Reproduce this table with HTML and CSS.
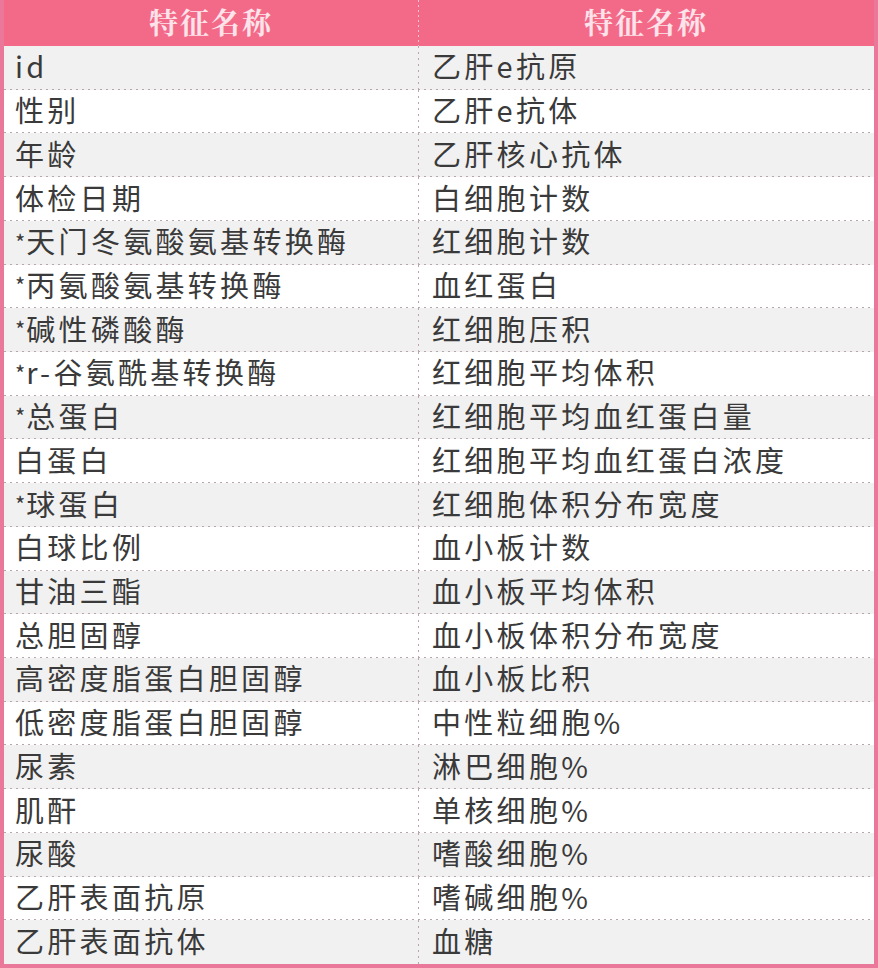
FILE: index.html
```html
<!DOCTYPE html>
<html lang="zh">
<head>
<meta charset="utf-8">
<title>特征名称</title>
<link rel="stylesheet" href="styles.css">
</head>
<body>
<div class="table">
  <div class="head">
    <div class="hcell">特征名称</div>
    <div class="hcell right">特征名称</div>
  </div>
  <div class="rows">
    <div class="row odd"><div class="cell">id</div><div class="cell right">乙肝e抗原</div></div>
    <div class="row"><div class="cell">性别</div><div class="cell right">乙肝e抗体</div></div>
    <div class="row odd"><div class="cell">年龄</div><div class="cell right">乙肝核心抗体</div></div>
    <div class="row"><div class="cell">体检日期</div><div class="cell right">白细胞计数</div></div>
    <div class="row odd"><div class="cell"><span class="star">*</span>天门冬氨酸氨基转换酶</div><div class="cell right">红细胞计数</div></div>
    <div class="row"><div class="cell"><span class="star">*</span>丙氨酸氨基转换酶</div><div class="cell right">血红蛋白</div></div>
    <div class="row odd"><div class="cell"><span class="star">*</span>碱性磷酸酶</div><div class="cell right">红细胞压积</div></div>
    <div class="row"><div class="cell"><span class="star">*</span>r-谷氨酰基转换酶</div><div class="cell right">红细胞平均体积</div></div>
    <div class="row odd"><div class="cell"><span class="star">*</span>总蛋白</div><div class="cell right">红细胞平均血红蛋白量</div></div>
    <div class="row"><div class="cell">白蛋白</div><div class="cell right">红细胞平均血红蛋白浓度</div></div>
    <div class="row odd"><div class="cell"><span class="star">*</span>球蛋白</div><div class="cell right">红细胞体积分布宽度</div></div>
    <div class="row"><div class="cell">白球比例</div><div class="cell right">血小板计数</div></div>
    <div class="row odd"><div class="cell">甘油三酯</div><div class="cell right">血小板平均体积</div></div>
    <div class="row"><div class="cell">总胆固醇</div><div class="cell right">血小板体积分布宽度</div></div>
    <div class="row odd"><div class="cell">高密度脂蛋白胆固醇</div><div class="cell right">血小板比积</div></div>
    <div class="row"><div class="cell">低密度脂蛋白胆固醇</div><div class="cell right">中性粒细胞%</div></div>
    <div class="row odd"><div class="cell">尿素</div><div class="cell right">淋巴细胞%</div></div>
    <div class="row"><div class="cell">肌酐</div><div class="cell right">单核细胞%</div></div>
    <div class="row odd"><div class="cell">尿酸</div><div class="cell right">嗜酸细胞%</div></div>
    <div class="row"><div class="cell">乙肝表面抗原</div><div class="cell right">嗜碱细胞%</div></div>
    <div class="row odd last"><div class="cell">乙肝表面抗体</div><div class="cell right">血糖</div></div>
  </div>
</div>
</body>
</html>
```

FILE: styles.css
```css
html, body {
  margin: 0;
  padding: 0;
  background: #ffffff;
}

.table {
  width: 878px;
  height: 968px;
  box-sizing: border-box;
  border: 4px solid #e9789a;
  border-top: none;
  display: flex;
  flex-direction: column;
  background: #ffffff;
  overflow: hidden;
}

.head {
  height: 46px;
  flex: none;
  display: grid;
  grid-template-columns: 414px 1fr;
  background: #f36a89;
  margin: 0 -4px;
  padding: 0 4px;
}

.hcell {
  display: flex;
  align-items: center;
  justify-content: center;
  color: #fde3ea;
  font-family: "Noto Serif CJK SC", "Noto Sans CJK SC", serif;
  font-size: 29px;
  line-height: 1.2;
  font-weight: 700;
  letter-spacing: 2px;
  padding-bottom: 2px;
}

.hcell.right {
  background-image: linear-gradient(to bottom, rgba(255,235,240,0.7) 50%, transparent 0);
  background-size: 1px 5px;
  background-repeat: repeat-y;
  background-position: left top;
}

.rows {
  flex: 1;
  min-height: 0;
  display: grid;
  grid-template-rows: repeat(21, minmax(0, 1fr));
}

.row {
  display: grid;
  grid-template-columns: 414px 1fr;
  min-height: 0;
  background-color: #ffffff;
  background-image: linear-gradient(to right, #b9a6ac 40%, transparent 0);
  background-size: 6px 1px;
  background-repeat: repeat-x;
  background-position: left bottom;
}

.row.odd {
  background-color: #f1f1f1;
}

.row.last {
  background-image: none;
}

.cell {
  display: flex;
  align-items: center;
  min-height: 0;
  padding-left: 11px;
  padding-bottom: 4px;
  color: #3a3a3a;
  font-family: "Noto Sans CJK SC", sans-serif;
  font-size: 29px;
  line-height: 1.2;
  font-weight: 400;
  letter-spacing: 3.3px;
  white-space: nowrap;
}

.cell.right {
  padding-left: 14px;
  background-image: linear-gradient(to bottom, #b9a6ac 40%, transparent 0);
  background-size: 1px 6px;
  background-repeat: repeat-y;
  background-position: left top;
}

.star {
  font-size: 22px;
  letter-spacing: 0;
  margin-right: 1px;
}
```
